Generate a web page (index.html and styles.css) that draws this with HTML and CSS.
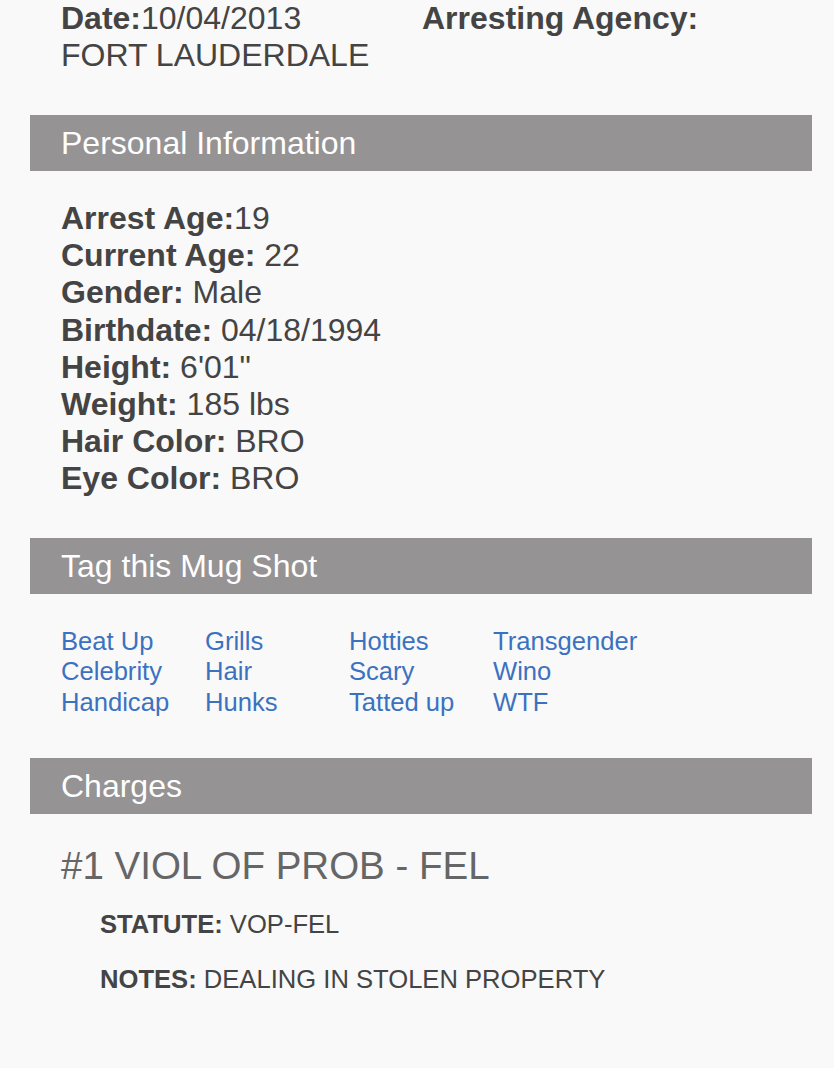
FILE: index.html
```html
<!DOCTYPE html>
<html>
<head>
<meta charset="utf-8">
<title>Mug Shot Details</title>
<link rel="stylesheet" href="styles.css">
</head>
<body>
<div class="page">
  <div class="meta">
    <span class="meta-date"><b>Date:</b>10/04/2013</span><span class="meta-agency"><b>Arresting Agency:</b> FORT LAUDERDALE</span>
  </div>

  <section class="panel">
    <h2 class="panel-title">Personal Information</h2>
    <div class="panel-body info">
      <div><b>Arrest Age:</b>19</div>
      <div><b>Current Age:</b> 22</div>
      <div><b>Gender:</b> Male</div>
      <div><b>Birthdate:</b> 04/18/1994</div>
      <div><b>Height:</b> 6'01"</div>
      <div><b>Weight:</b> 185 lbs</div>
      <div><b>Hair Color:</b> BRO</div>
      <div><b>Eye Color:</b> BRO</div>
    </div>
  </section>

  <section class="panel">
    <h2 class="panel-title">Tag this Mug Shot</h2>
    <div class="panel-body tags">
      <ul class="tag-col">
        <li><a href="#">Beat Up</a></li>
        <li><a href="#">Celebrity</a></li>
        <li><a href="#">Handicap</a></li>
      </ul>
      <ul class="tag-col">
        <li><a href="#">Grills</a></li>
        <li><a href="#">Hair</a></li>
        <li><a href="#">Hunks</a></li>
      </ul>
      <ul class="tag-col">
        <li><a href="#">Hotties</a></li>
        <li><a href="#">Scary</a></li>
        <li><a href="#">Tatted up</a></li>
      </ul>
      <ul class="tag-col">
        <li><a href="#">Transgender</a></li>
        <li><a href="#">Wino</a></li>
        <li><a href="#">WTF</a></li>
      </ul>
    </div>
  </section>

  <section class="panel">
    <h2 class="panel-title">Charges</h2>
    <div class="panel-body charges">
      <h3 class="charge-title">#1 VIOL OF PROB - FEL</h3>
      <p class="charge-line"><b>STATUTE:</b> VOP-FEL</p>
      <p class="charge-line"><b>NOTES:</b> DEALING IN STOLEN PROPERTY</p>
    </div>
  </section>
</div>
</body>
</html>
```

FILE: styles.css
```css
html, body {
  margin: 0;
  padding: 0;
  background: #f9f9f9;
}

body {
  font-family: "Liberation Sans", Arial, Helvetica, sans-serif;
  color: #444444;
}

.page {
  margin: 0 22px 0 30px;
  padding-bottom: 60px;
}

.meta {
  padding: 0 31px;
  font-size: 32px;
  line-height: 37px;
  margin-bottom: 41px;
}

.meta b {
  font-weight: bold;
}

.meta-date {
  display: inline-block;
  width: 361px;
}

.panel-title {
  margin: 0;
  height: 56px;
  line-height: 56px;
  padding: 0 31px;
  background: #959394;
  color: #ffffff;
  font-size: 32px;
  font-weight: normal;
}

.panel-body {
  padding: 29px 31px 40px;
}

.info {
  font-size: 32px;
  line-height: 37.2px;
}

.tags {
  display: flex;
  padding-top: 32px;
  padding-bottom: 41px;
}

.tag-col {
  list-style: none;
  margin: 0;
  padding: 0;
  width: 144px;
  font-size: 25.6px;
  line-height: 30.5px;
}

.tag-col a {
  color: #3b72c0;
  text-decoration: none;
}

.charges {
  padding-top: 30px;
}

.charge-title {
  margin: 0 0 22px;
  font-size: 38.5px;
  font-weight: normal;
  line-height: 44px;
  color: #666666;
}

.charge-line {
  margin: 0 0 26px 39px;
  font-size: 25.6px;
  line-height: 29px;
  color: #444444;
}
```
